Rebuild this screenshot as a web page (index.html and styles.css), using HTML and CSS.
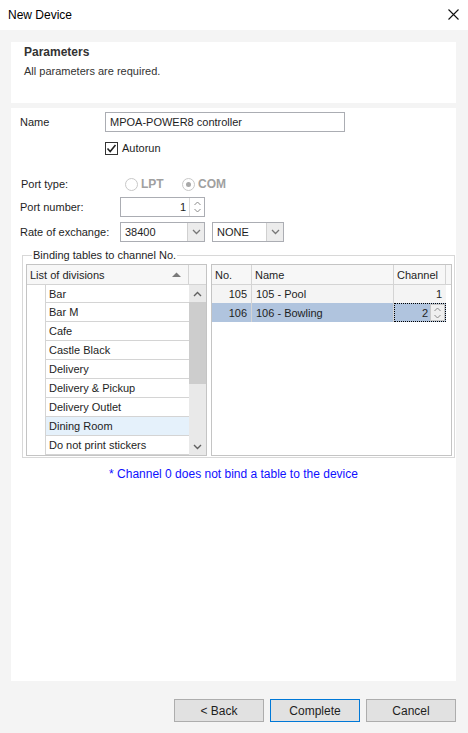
FILE: index.html
```html
<!DOCTYPE html>
<html>
<head>
<meta charset="utf-8">
<link rel="stylesheet" href="styles.css">
</head>
<body>
<div class="titlebar">
  <span class="title">New Device</span>
  <svg class="close" width="11" height="11" viewBox="0 0 11 11"><path d="M0.5 0.5 L10.5 10.5 M10.5 0.5 L0.5 10.5" stroke="#111" stroke-width="1.1" fill="none"/></svg>
</div>
<div class="wrap">
  <div class="header">
    <div class="h-title">Parameters</div>
    <div class="h-sub">All parameters are required.</div>
  </div>
  <div class="main">
    <div class="form">
      <div class="row row-name">
        <span class="lbl lbl-name">Name</span>
        <div class="input name-input">MPOA-POWER8 controller</div>
      </div>
      <div class="row row-check">
        <span class="checkbox"><svg width="11" height="11" viewBox="0 0 11 11"><path d="M1.5 5.5 L4.2 8.5 L9.5 2" stroke="#222" stroke-width="1.6" fill="none"/></svg></span>
        <span>Autorun</span>
      </div>
      <div class="row row-port">
        <span class="lbl lbl-wide port-lbl">Port type:</span>
        <span class="radio-item first"><span class="radio"></span><span class="radio-text">LPT</span></span>
        <span class="radio-item"><span class="radio on"><span class="dot"></span></span><span class="radio-text">COM</span></span>
      </div>
      <div class="row row-spin">
        <span class="lbl lbl-wide">Port number:</span>
        <div class="input spin">
          <span class="spin-val">1</span>
          <span class="spin-btn">
            <svg width="7" height="5" viewBox="0 0 7 5"><path d="M0.5 4 L3.5 1 L6.5 4" stroke="#8a8a8a" fill="none"/></svg>
            <svg width="7" height="5" viewBox="0 0 7 5"><path d="M0.5 1 L3.5 4 L6.5 1" stroke="#8a8a8a" fill="none"/></svg>
          </span>
        </div>
      </div>
      <div class="row row-rate">
        <span class="lbl lbl-wide">Rate of exchange:</span>
        <div class="input combo combo-rate"><span class="combo-val">38400</span><span class="combo-btn"><svg width="9" height="6" viewBox="0 0 9 6"><path d="M1 1 L4.5 4.5 L8 1" stroke="#777" stroke-width="1.3" fill="none"/></svg></span></div>
        <div class="input combo combo-parity"><span class="combo-val">NONE</span><span class="combo-btn"><svg width="9" height="6" viewBox="0 0 9 6"><path d="M1 1 L4.5 4.5 L8 1" stroke="#777" stroke-width="1.3" fill="none"/></svg></span></div>
      </div>
      <fieldset class="group">
        <legend>Binding tables to channel No.</legend>
        <div class="grids">
          <div class="grid grid-left">
            <div class="lhead">
              <div class="lhead-cell"><span>List of divisions</span><svg width="9" height="5" viewBox="0 0 9 5"><path d="M0 5 L4.5 0.5 L9 5 Z" fill="#7a7a7a"/></svg></div>
              <div class="lhead-corner"></div>
            </div>
            <div class="lbody">
              <div class="lrows">
                <div class="lrow"><span class="ind"></span><span class="lcell">Bar</span></div>
                <div class="lrow"><span class="ind"></span><span class="lcell">Bar M</span></div>
                <div class="lrow"><span class="ind"></span><span class="lcell">Cafe</span></div>
                <div class="lrow"><span class="ind"></span><span class="lcell">Castle Black</span></div>
                <div class="lrow"><span class="ind"></span><span class="lcell">Delivery</span></div>
                <div class="lrow"><span class="ind"></span><span class="lcell">Delivery &amp; Pickup</span></div>
                <div class="lrow"><span class="ind"></span><span class="lcell">Delivery Outlet</span></div>
                <div class="lrow hot"><span class="ind"></span><span class="lcell">Dining Room</span></div>
                <div class="lrow"><span class="ind"></span><span class="lcell">Do not print stickers</span></div>
              </div>
              <div class="vscroll">
                <div class="sb-arrow"><svg width="9" height="6" viewBox="0 0 9 6"><path d="M1 5 L4.5 1.5 L8 5" stroke="#606060" stroke-width="1.4" fill="none"/></svg></div>
                <div class="sb-thumb"></div>
                <div class="sb-track"></div>
                <div class="sb-arrow"><svg width="9" height="6" viewBox="0 0 9 6"><path d="M1 1 L4.5 4.5 L8 1" stroke="#606060" stroke-width="1.4" fill="none"/></svg></div>
              </div>
            </div>
          </div>
          <div class="grid grid-right">
            <div class="rhead">
              <div class="rh c-no">No.</div>
              <div class="rh c-name">Name</div>
              <div class="rh c-ch">Channel</div>
              <div class="rh c-rest"></div>
            </div>
            <div class="rrow odd">
              <div class="rc c-no num">105</div>
              <div class="rc c-name">105 - Pool</div>
              <div class="rc c-ch num">1</div>
            </div>
            <div class="rrow sel">
              <div class="rc c-no num">106</div>
              <div class="rc c-name">106 - Bowling</div>
              <div class="rc c-ch editing">
                <span class="edit-val">2</span>
                <span class="edit-spin">
                  <svg width="7" height="5" viewBox="0 0 7 5"><path d="M0.5 4 L3.5 1 L6.5 4" stroke="#8a8a8a" fill="none"/></svg>
                  <svg width="7" height="5" viewBox="0 0 7 5"><path d="M0.5 1 L3.5 4 L6.5 1" stroke="#8a8a8a" fill="none"/></svg>
                </span>
              </div>
            </div>
          </div>
        </div>
      </fieldset>
    </div>
    <div class="note">* Channel 0 does not bind a table to the device</div>
  </div>
  <div class="footer">
    <div class="btn">&lt; Back</div>
    <div class="btn primary">Complete</div>
    <div class="btn">Cancel</div>
  </div>
</div>
</body>
</html>
```
FILE: styles.css
```css
* { box-sizing: border-box; }
html, body { margin: 0; padding: 0; }
body {
  width: 468px;
  height: 733px;
  background: #f4f4f4;
  font-family: "Liberation Sans", Arial, sans-serif;
  font-size: 11px;
  color: #1e1e1e;
  overflow: hidden;
}
.titlebar {
  height: 30px;
  background: #fff;
  display: flex;
  align-items: center;
  justify-content: space-between;
  padding: 0 9px 0 8px;
}
.title { font-size: 12px; color: #000; }
.close { display: block; margin-top: -1px; }
.wrap { padding: 12px 12px 0 11px; }
.header {
  height: 61px;
  background: #fff;
  padding: 3px 13px;
}
.h-title { font-weight: bold; font-size: 12px; line-height: 15px; color: #333; }
.h-sub { font-size: 11px; line-height: 15px; margin-top: 4px; color: #333; }
.main {
  margin-top: 5px;
  height: 573px;
  background: #fff;
  padding-top: 4px;
}
.form { padding-left: 9px; padding-right: 3px; }
.row { display: flex; align-items: center; }
.lbl { flex: none; }
.lbl-name { width: 85px; }
.lbl-wide { width: 100px; }
.input {
  border: 1px solid #abadb3;
  background: #fff;
  height: 20px;
  display: flex;
  align-items: center;
}
.row-name { height: 20px; }
.name-input { width: 240px; padding-left: 4px; }
.row-check { margin-top: 9px; margin-left: 85px; height: 14px; }
.checkbox {
  width: 13px; height: 13px;
  border: 1px solid #333;
  display: flex; align-items: center; justify-content: center;
  margin-right: 4px;
  background: #fff;
}
.checkbox svg { display: block; }
.row-port { margin-top: 21px; height: 16px; }
.port-lbl { width: 105px; padding-left: 1px; }
.radio-item { display: flex; align-items: center; }
.radio-item.first { width: 57px; }
.radio {
  width: 13px; height: 13px;
  border: 1px solid #c8c8c8;
  border-radius: 50%;
  display: flex; align-items: center; justify-content: center;
  margin-right: 3px;
}
.radio .dot { width: 5px; height: 5px; border-radius: 50%; background: #a8a8a8; }
.radio-text { font-weight: bold; color: #a0a0a0; font-size: 12px; }
.row-spin { margin-top: 5px; height: 20px; }
.spin { width: 85px; justify-content: flex-end; }
.spin-val { padding-right: 3px; }
.spin-btn {
  width: 15px; height: 18px;
  border-left: 1px solid #d9d9d9;
  display: flex; flex-direction: column; align-items: center; justify-content: center;
  gap: 2px;
}
.spin-btn svg, .edit-spin svg { display: block; }
.row-rate { margin-top: 5px; height: 20px; }
.combo { justify-content: space-between; }
.combo-val { padding-left: 4px; }
.combo-rate { width: 85px; }
.combo-parity { width: 72px; margin-left: 7px; }
.combo-btn {
  width: 17px; height: 18px;
  background: #ececec;
  border-left: 1px solid #d0d0d0;
  display: flex; align-items: center; justify-content: center;
}
.group {
  margin: 7px 0 0 2px;
  width: 432px;
  border: 1px solid #d8d8d8;
  padding: 2px 2px 1px 3px;
}
.group legend {
  margin-left: 6px;
  padding: 0 1px;
  line-height: 13px;
  font-size: 11px;
}
.grids { display: flex; gap: 4px; }
.grid {
  border: 1px solid #c4c4c4;
  height: 192px;
  background: #fff;
}
.grid-left { width: 181px; display: flex; flex-direction: column; }
.lhead { display: flex; height: 20px; border-bottom: 1px solid #d4d4d4; background: #f7f7f7; flex: none; }
.lhead-cell {
  width: 162px;
  display: flex; align-items: center; justify-content: space-between;
  padding: 0 7px 0 3px;
  border-right: 1px solid #d4d4d4;
}
.lhead-cell svg { display: block; }
.lhead-corner { flex: 1; }
.lbody { display: flex; flex: 1; min-height: 0; }
.lrows { width: 162px; }
.lrow { display: flex; height: 19px; }
.lrow:first-child { height: 18px; }
.ind { width: 19px; border-right: 1px solid #d4d4d4; flex: none; }
.lcell {
  flex: 1;
  border-bottom: 1px solid #d4d4d4;
  padding-left: 3px;
  display: flex; align-items: center;
}
.lrow.hot .lcell { background: #e5f1fb; }
.vscroll { width: 17px; background: #e9e9e9; display: flex; flex-direction: column; }
.sb-arrow { height: 17px; display: flex; align-items: center; justify-content: center; flex: none; }
.sb-arrow svg { display: block; }
.sb-thumb { height: 82px; background: #cdcdcd; flex: none; margin-left: 0; }
.sb-track { flex: 1; }
.grid-right { width: 241px; }
.rhead { display: flex; height: 20px; border-bottom: 1px solid #d4d4d4; background: #f7f7f7; }
.rh { display: flex; align-items: center; padding-left: 3px; border-right: 1px solid #d4d4d4; }
.c-no { width: 40px; flex: none; }
.c-name { width: 142px; flex: none; }
.c-ch { width: 52px; flex: none; }
.c-rest { flex: 1; border-right: none; }
.rrow { display: flex; height: 19px; width: 234px; }
.rrow.odd { background: #f4f4f4; height: 18px; }
.rrow.sel { background: #b0c4de; }
.rc {
  display: flex; align-items: center;
  padding-left: 4px;
  border-right: 1px solid #d4d4d4;
}
.rc.c-ch { border-right: none; }
.rc.num { justify-content: flex-end; padding-left: 0; padding-right: 4px; }
.rc.editing {
  border: 1px dotted #000;
  justify-content: flex-end;
  padding: 0;
}
.edit-val { padding-right: 2px; }
.edit-spin {
  width: 15px; height: 17px;
  background: #efefef;
  border: 1px solid #c8c8c8;
  display: flex; flex-direction: column; align-items: center; justify-content: center;
  gap: 2px;
}
.note {
  margin-top: 9px;
  text-align: center;
  color: #1010ff;
  font-size: 12px;
}
.footer {
  height: 52px;
  display: flex;
  justify-content: flex-end;
  gap: 6px;
  padding-top: 18px;
}
.btn {
  width: 90px; height: 23px;
  border: 1px solid #adadad;
  background: #e1e1e1;
  display: flex; align-items: center; justify-content: center;
  font-size: 12px;
  color: #1e1e1e;
}
.btn.primary { border-color: #0078d7; }
```
